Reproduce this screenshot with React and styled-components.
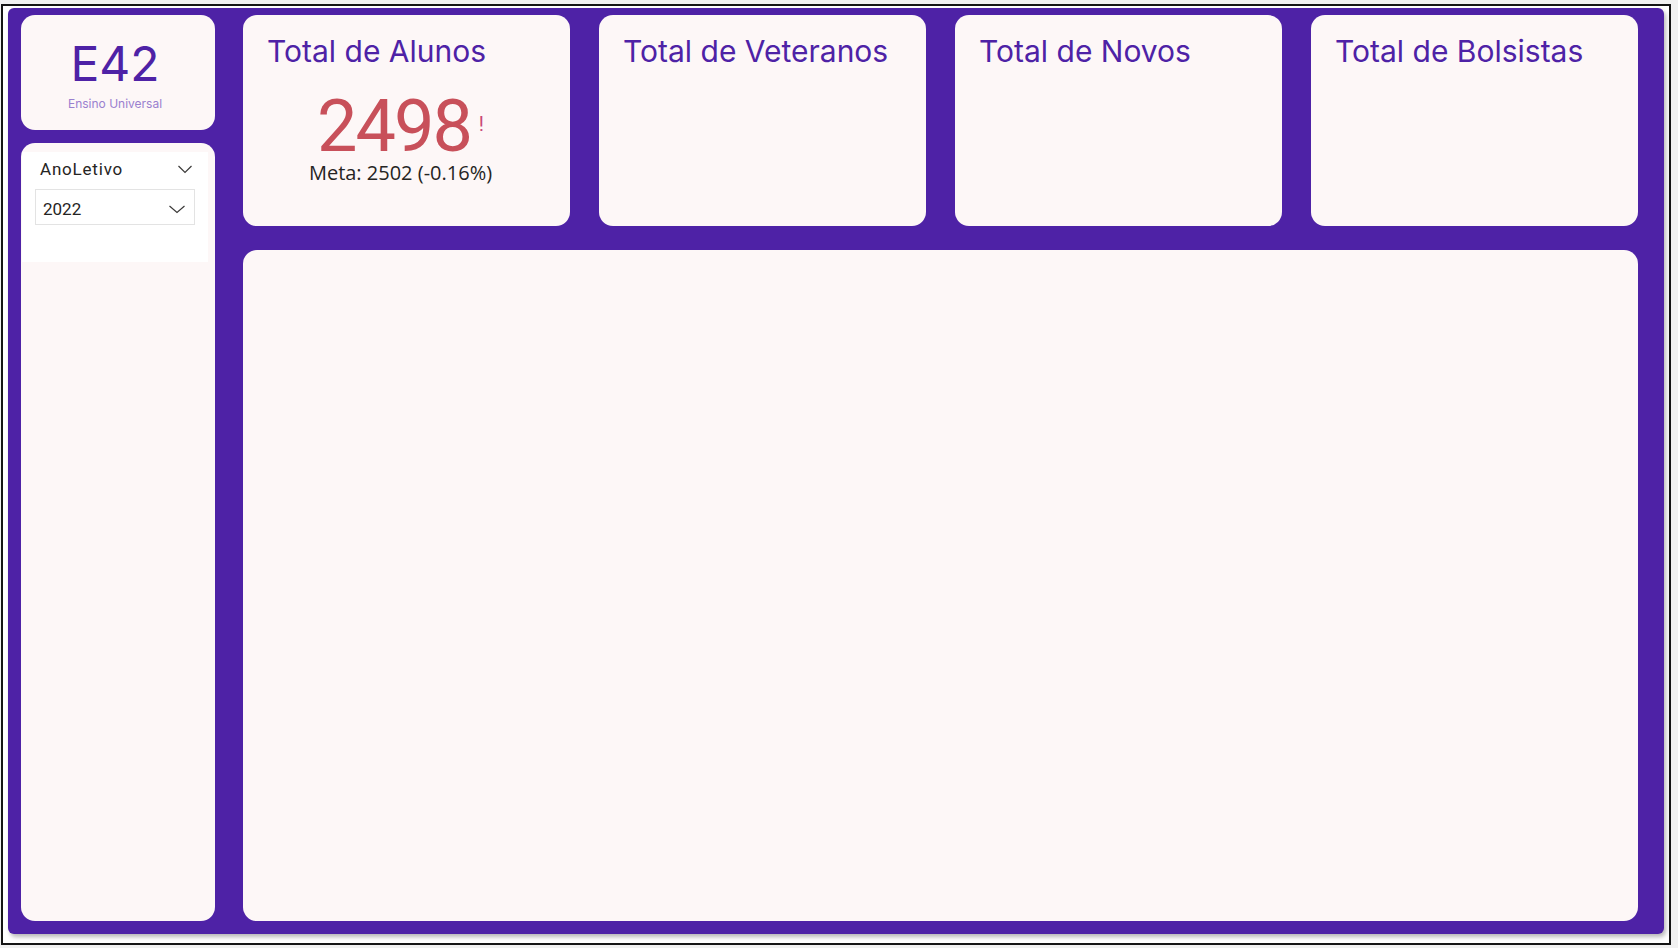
import React from "react";
import styled, { createGlobalStyle } from "styled-components";

const GlobalStyle = createGlobalStyle`
  html, body {
    margin: 0;
    padding: 0;
    background: #f1f1f1;
  }
  * {
    box-sizing: border-box;
  }
`;

// moldura do relatório (borda preta + fundo branco)
const Frame = styled.div`
  margin: 4px 0 0 1px;
  width: 1670px;
  height: 941px;
  border: 2px solid #151515;
  background: #ffffff;
  padding: 2px 5px 9px 5px;
`;

const Panel = styled.div`
  width: 100%;
  height: 100%;
  background: #4e22a6;
  border-radius: 6px;
  box-shadow: 2px 3px 4px rgba(0, 0, 0, 0.28);
  padding: 7px 26px 13px 13px;
  display: grid;
  grid-template-columns: 194px 1fr;
  column-gap: 28px;
`;

const Column = styled.div`
  display: flex;
  flex-direction: column;
  gap: ${(p) => p.gap}px;
  min-height: 0;
`;

const Card = styled.div`
  background: #fdf7f7;
  border-radius: 14px;
  ${(p) => (p.grow ? "flex: 1;" : "")}
`;

const LogoCard = styled(Card)`
  height: 115px;
  display: flex;
  flex-direction: column;
  align-items: center;
  padding: 25px 6px 0 0;
`;

const LogoText = styled.div`
  font-family: Inter, "Liberation Sans", sans-serif;
  font-size: 48px;
  line-height: 1;
  color: #4e22a6;
`;

const LogoSub = styled.div`
  margin-top: 10px;
  font-family: Inter, "Liberation Sans", sans-serif;
  font-size: 12px;
  line-height: 1;
  color: #9a80cf;
`;

const FilterCard = styled(Card)`
  flex: 1;
  padding: 9px 7px 0 1px;
`;

const Slicer = styled.div`
  background: #ffffff;
  height: 110px;
  padding: 9px 13px 0 13px;
`;

const SlicerHeader = styled.div`
  display: flex;
  align-items: center;
  justify-content: space-between;
  padding: 0 3px 0 5px;
  font-family: Roboto, "DejaVu Sans", sans-serif;
  font-size: 17px;
  line-height: 1;
  letter-spacing: 0.8px;
  color: #252423;
`;

const Dropdown = styled.div`
  margin-top: 11px;
  height: 36px;
  border: 1px solid #e3e3e3;
  display: flex;
  align-items: center;
  justify-content: space-between;
  padding: 5px 9px 0 7px;
  font-family: Roboto, "DejaVu Sans", sans-serif;
  font-size: 17px;
  line-height: 1;
  color: #252423;
`;

const KpiRow = styled.div`
  display: grid;
  grid-template-columns: repeat(4, 1fr);
  column-gap: 29px;
  height: 211px;
`;

const KpiTitle = styled.div`
  padding: 21px 0 0 24px;
  font-family: Inter, "Liberation Sans", sans-serif;
  font-size: 30px;
  line-height: 1;
  color: #4e22a6;
  white-space: nowrap;
`;

const KpiBody = styled.div`
  display: flex;
  flex-direction: column;
  align-items: center;
  margin-top: 30px;
  padding-right: 12px;
`;

const ValueRow = styled.div`
  display: flex;
  align-items: flex-start;
`;

const Value = styled.span`
  font-family: Roboto, "DejaVu Sans", sans-serif;
  font-size: 72px;
  line-height: 62px;
  letter-spacing: -2px;
  color: #c8505a;
`;

const Alert = styled.span`
  margin: 18px 0 0 8px;
  font-family: Roboto, "DejaVu Sans", sans-serif;
  font-size: 20px;
  line-height: 1;
  color: #c94a78;
`;

const Goal = styled.div`
  margin-top: 5px;
  font-family: "Open Sans", "Noto Sans", sans-serif;
  font-size: 20px;
  line-height: 1;
  color: #252423;
`;

const Chevron = ({ w = 14, h = 7 }) => (
  <svg width={w} height={h + 2} viewBox={`0 0 ${w} ${h + 2}`} fill="none">
    <polyline
      points={`0.5,1 ${w / 2},${h + 0.5} ${w - 0.5},1`}
      stroke="#3b3a39"
      strokeWidth="1.2"
    />
  </svg>
);

const kpis = [
  { title: "Total de Alunos", value: "2498", goal: "Meta: 2502 (-0.16%)" },
  { title: "Total de Veteranos" },
  { title: "Total de Novos" },
  { title: "Total de Bolsistas" },
];

const App = () => {
  return (
    <>
      <GlobalStyle />
      <Frame>
        <Panel>
          {/* coluna esquerda: logo + filtro */}
          <Column gap={13}>
            <LogoCard>
              <LogoText>E42</LogoText>
              <LogoSub>Ensino Universal</LogoSub>
            </LogoCard>
            <FilterCard>
              <Slicer>
                <SlicerHeader>
                  <span>AnoLetivo</span>
                  <Chevron />
                </SlicerHeader>
                <Dropdown>
                  <span>2022</span>
                  <Chevron w={16} h={7} />
                </Dropdown>
              </Slicer>
            </FilterCard>
          </Column>

          {/* cartões + área principal */}
          <Column gap={24}>
            <KpiRow>
              {kpis.map((k, index) => (
                <Card key={index}>
                  <KpiTitle>{k.title}</KpiTitle>
                  {k.value && (
                    <KpiBody>
                      <ValueRow>
                        <Value>{k.value}</Value>
                        <Alert>!</Alert>
                      </ValueRow>
                      <Goal>{k.goal}</Goal>
                    </KpiBody>
                  )}
                </Card>
              ))}
            </KpiRow>
            <Card grow />
          </Column>
        </Panel>
      </Frame>
    </>
  );
};

export default App;
